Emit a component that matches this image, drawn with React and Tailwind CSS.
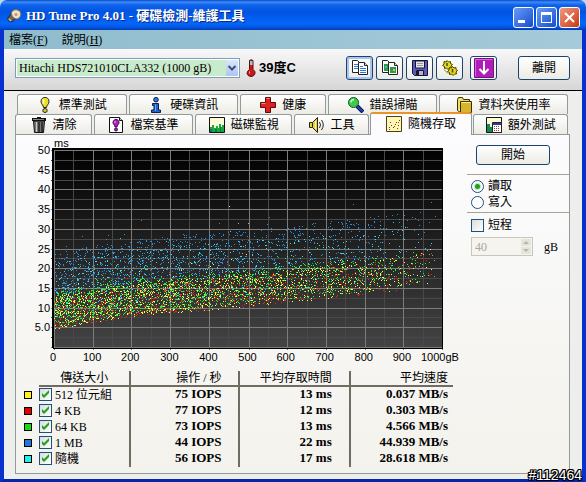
import React, { useState } from "react";
import clsx from "clsx";

const SANS = "font-['Liberation_Sans','Noto_Sans_CJK_TC',sans-serif]";
const SERIF = "font-['Liberation_Serif','Noto_Sans_CJK_TC',serif]";

/* ---------- icons ---------- */

const Icon = ({ children }) => (
  <svg viewBox="0 0 16 16" className="h-4 w-4 shrink-0" aria-hidden="true">
    {children}
  </svg>
);

const DriveIcon = () => (
  <Icon>
    <path d="M1.500 10.500l5-6 4 4-4 5-3 0z" fill="#6e6458" stroke="#2c241c" />
    <path d="M5.500 5.500c0-3.500 4.500-5 8-2.500 2.500 2.500 1 7-2.500 8-2.500 0-5.500-2.500-5.500-5.500z" fill="#f0dfc0" stroke="#8a7050" />
    <circle cx="10" cy="6.500" r="1.500" fill="#c09878" />
    <path d="M3 11l2 2" stroke="#cfc8bb" strokeWidth="1.500" />
  </Icon>
);

const BulbIcon = () => (
  <Icon>
    <path d="M4 4.500c0-5.500 8-5.500 8 0 0 3-2.500 3.500-2.500 6h-3c0-2.500-2.500-3-2.500-6z" fill="#e8e020" stroke="#222" />
    <path d="M6.500 2.500v4" stroke="#fff" strokeWidth="1.500" />
    <ellipse cx="8" cy="13.500" rx="2.200" ry="2" fill="#d8d020" stroke="#222" />
  </Icon>
);

const InfoIcon = () => (
  <Icon>
    <circle cx="8" cy="2.700" r="2.300" fill="#2a7be0" stroke="#0a1c50" />
    <path d="M4.500 6.500h6v6.500h2v2.500h-9v-2.500h2.500v-4.500h-1.500z" fill="#1e62cc" stroke="#0a1c50" />
    <path d="M7.500 7.500v6.500" stroke="#6ab0f4" />
  </Icon>
);

const CrossIcon = () => (
  <Icon>
    <path d="M5.500 0.500h5v5h5v5h-5v5h-5v-5h-5v-5h5z" fill="#e02020" stroke="#5c0a0a" />
    <path d="M6.500 1.500h3M1.500 6.500h4" stroke="#ff8a80" />
  </Icon>
);

const LensIcon = () => (
  <Icon>
    <path d="M9 9l6 6" stroke="#061250" strokeWidth="4" />
    <path d="M9 9l5.500 5.500" stroke="#2344b8" strokeWidth="2" />
    <circle cx="5.500" cy="5.500" r="5" fill="#3ccb4a" stroke="#0b5a1c" />
    <path d="M3 5.500c0-2 1-3 3-3" stroke="#c8ffc8" fill="none" strokeWidth="1.500" />
  </Icon>
);

const FolderIcon = () => (
  <Icon>
    <path d="M1.500 13.500v-11l1-2h4l1 2h6v2" fill="#f2dc68" stroke="#3a3000" />
    <path d="M4.500 4.500h11v11h-11z" fill="#d9b52c" stroke="#3a3000" />
    <path d="M1.500 13.500l3 2" stroke="#3a3000" />
    <path d="M5.500 5.500h9" stroke="#fff0a0" />
  </Icon>
);

const TrashIcon = () => (
  <Icon>
    <path d="M2.500 4h11l-1 11.500h-9z" fill="#777" stroke="#111" />
    <path d="M1 2.500h14" stroke="#111" strokeWidth="3" />
    <path d="M2 2.500h11" stroke="#888" />
    <path d="M6 .5h4" stroke="#111" />
    <path d="M5.500 5v10" stroke="#ccc" />
    <path d="M8 5v10M11 5v10" stroke="#222" strokeWidth="1.500" />
  </Icon>
);

const FileBulbIcon = () => (
  <Icon>
    <path d="M1.500 .5h10l3 3v12h-13z" fill="#fff" stroke="#111" />
    <path d="M11.500 .5v3h3" fill="#ccc" stroke="#111" />
    <path d="M5 5.500c0-4 6-4 6 0 0 2-2 2.500-2 4.500h-2c0-2-2-2.500-2-4.500z" fill="#b01cc0" stroke="#3c0646" />
    <path d="M7 4v2" stroke="#f0b0f8" />
    <circle cx="8" cy="12.500" r="1.500" fill="#b01cc0" stroke="#3c0646" />
  </Icon>
);

const MonitorIcon = () => (
  <Icon>
    <path d="M.5 .5h15v15h-15z" fill="#fdfcd8" stroke="#111" />
    <path d="M1 15v-5h2v-2h2v3h2v-2h2v2h1v-4h2v3h1v-2h2v7z" fill="#19a83c" />
    <path d="M1 12h2v3h-2zM6 12h2v3h-2zM11 10h1v5h-1z" fill="#0b7468" />
  </Icon>
);

const SpeakerIcon = () => (
  <Icon>
    <path d="M.5 5.500h3l5-5v15l-5-5h-3z" fill="#e6d228" stroke="#222" />
    <path d="M6.500 4v8" stroke="#fff7a0" />
    <path d="M3.500 5.500v5" stroke="#222" />
    <path d="M10.500 5q2 3 0 6M12.500 3q3.500 5 0 10" fill="none" stroke="#222" />
  </Icon>
);

const ScatterIcon = () => (
  <Icon>
    <path d="M.5 .5h15v15h-15z" fill="#fdf6b4" stroke="#4c4210" />
    <path
      d="M3 11h1v1h-1zM5 9h1v1h-1zM7 11h1v1h-1zM9 8h1v1h-1zM12 9h1v1h-1zM11 12h1v1h-1zM13 4h1v1h-1zM4 6h1v1h-1z"
      fill="#5c4a10"
      shapeRendering="crispEdges"
    />
    <path d="M3 13h1v1h-1zM8 10h1v1h-1zM10 6h1v1h-1zM12 6h1v1h-1z" fill="#d02020" shapeRendering="crispEdges" />
  </Icon>
);

const ExtraIcon = () => (
  <Icon>
    <path d="M.5 .5h15v15h-15z" fill="#fdfcd8" stroke="#111" />
    <path d="M1 15v-8h3v3h3v5z" fill="#138a54" />
    <path d="M6.500 5.500h9v10h-9z" fill="#fff" stroke="#222" />
    <path d="M7 7h8" stroke="#283c98" strokeWidth="2" />
    <path
      d="M8 9h1v1h-1zM10 9h1v1h-1zM12 9h1v1h-1zM8 11h1v1h-1zM10 11h1v1h-1zM12 11h1v1h-1zM8 13h1v1h-1zM10 13h1v1h-1zM12 13h1v1h-1z"
      fill="#a03c50"
    />
  </Icon>
);

const CopyTextIcon = () => (
  <Icon>
    <path d="M.5 .5h5l3 3v9h-8z" fill="#fff" stroke="#222" />
    <path d="M2 4.500h4M2 6.500h5M2 8.500h5" stroke="#2e7ad0" />
    <path d="M6.500 2.500h6l3 3v9h-9z" fill="#fff" stroke="#222" />
    <path d="M12.500 2.500v3h3" fill="#ddd" stroke="#222" />
    <path d="M8 6.500h3M8 8.500h6M8 10.500h6M8 12.500h6" stroke="#2e7ad0" />
  </Icon>
);

const CopyImageIcon = () => (
  <Icon>
    <path d="M.5 .5h5l3 3v9h-8z" fill="#fff" stroke="#222" />
    <path d="M2 4h4v7h-4z" fill="#2e9a48" />
    <path d="M6.500 2.500h6l3 3v9h-9z" fill="#fff" stroke="#222" />
    <path d="M12.500 2.500v3h3" fill="#ddd" stroke="#222" />
    <path d="M8 7h6v6h-6z" fill="#2e9a48" />
    <path d="M11 9h2v2h-2z" fill="#e0c840" />
    <path d="M3 6h2v2h-2z" fill="#48b8c0" />
  </Icon>
);

const SaveIcon = () => (
  <Icon>
    <path d="M.5 .5h15v15h-13l-2-2z" fill="#5a5cb4" stroke="#15153c" />
    <path d="M3.500 1h9v7h-9z" fill="#e4e4ec" stroke="#15153c" />
    <path d="M5 3.500h6M5 5.500h6" stroke="#999" />
    <path d="M4.500 10.500h7v5h-7z" fill="#b8b8b8" stroke="#15153c" />
    <path d="M6 11v4" stroke="#15153c" strokeWidth="2" />
  </Icon>
);

const GearsIcon = () => (
  <Icon>
    <path
      d="M2 1.500l2 .5 1-1.500 1.500 1.500 2-.5 0 2 2 1-1.500 1.500 .5 2-2 0-1.500 1.500-1.500-1.500-2 .5 0-2-2-1 1.500-1.500z"
      fill="#e4d81c"
      stroke="#4a4400"
    />
    <path
      d="M7.500 7.500l2 .5 1-1.500 1.500 1.500 2-.5 0 2 1.500 1-1.500 1.500 .5 2-2 0-1.500 1.500-1.500-1.500-2 .5 0-2-2-1 1.500-1.500z"
      fill="#e4d81c"
      stroke="#4a4400"
    />
    <path d="M5 3v3M10.500 9v3.500" stroke="#4a4400" strokeWidth="1.500" />
    <path d="M2 9.500l4 4" stroke="#8a8010" />
  </Icon>
);

const DownIcon = () => (
  <svg viewBox="0 0 20 20" className="h-5 w-5 shrink-0" aria-hidden="true">
    <path d="M.5 .5h19v19h-19z" fill="#b01cb8" stroke="#7a0f84" />
    <path d="M1.500 18.500v-17h17" fill="none" stroke="#d868e0" />
    <path d="M10 3v12M5.500 11l4.500 4.500 4.500-4.500" fill="none" stroke="#fff" strokeWidth="2" />
  </svg>
);

const Thermometer = () => (
  <svg viewBox="0 0 10 18" className="h-[18px] w-2.5 shrink-0" aria-hidden="true">
    <path d="M3.500 1.500q1.500-1.500 3.500 0v9q2.500 1.500 2 4-1 3-4 3t-4-3q0-2.500 2.500-4z" fill="#d01818" stroke="#5c0a0a" />
    <path d="M4 2h2.500v4h-2.500z" fill="#8fd0d8" />
    <path d="M3.500 12.500v2" stroke="#ffb0a8" />
  </svg>
);

/* ---------- data ---------- */

const topTabs = [
  { label: "標準測試", icon: <BulbIcon />, grow: "flex-110" },
  { label: "硬碟資訊", icon: <InfoIcon />, grow: "flex-110" },
  { label: "健康", icon: <CrossIcon />, grow: "flex-86" },
  { label: "錯誤掃瞄", icon: <LensIcon />, grow: "flex-109" },
  { label: "資料夾使用率", icon: <FolderIcon />, grow: "flex-130" },
];

const bottomTabs = [
  { label: "清除", icon: <TrashIcon />, grow: "flex-77" },
  { label: "檔案基準", icon: <FileBulbIcon />, grow: "flex-99" },
  { label: "磁碟監視", icon: <MonitorIcon />, grow: "flex-98" },
  { label: "工具", icon: <SpeakerIcon />, grow: "flex-74" },
  { label: "隨機存取", icon: <ScatterIcon />, grow: "flex-103", active: true },
  { label: "額外測試", icon: <ExtraIcon />, grow: "flex-95" },
];

const results = [
  { id: "r512", label: "512 位元組", swatch: "bg-[#fff21c]", iops: 75, ms: 13, speed: "0.037" },
  { id: "r4k", label: "4 KB", swatch: "bg-[#e00000]", iops: 77, ms: 12, speed: "0.303" },
  { id: "r64k", label: "64 KB", swatch: "bg-[#18d818]", iops: 73, ms: 13, speed: "4.566" },
  { id: "r1m", label: "1 MB", swatch: "bg-[#1c78dc]", iops: 44, ms: 22, speed: "44.939" },
  { id: "rnd", label: "隨機", swatch: "bg-[#20f0f0]", iops: 56, ms: 17, speed: "28.618" },
];

/* ---------- chart ---------- */

const LEFT = 38;
const BOTTOM = 212;
const COL = 38.7;
const ROW = 19.7;

const xs = Array.from({ length: 21 }, (_, i) => Math.round(LEFT + (i * COL) / 2));
const ys = Array.from({ length: 21 }, (_, i) => Math.round(BOTTOM - (i * ROW) / 2));

// fastest access time (ms) at each 100 gB
const floorMs = [4.5, 6.3, 7.8, 8.8, 9.3, 10.3, 11.4, 12.4, 13.4, 14.8, 17];

const floorAt = (gb) => {
  const i = Math.min(9, Math.floor(gb / 100));
  return floorMs[i] + (floorMs[i + 1] - floorMs[i]) * (gb / 100 - i);
};

const series = [
  { color: "#2c8cdc", count: 1050, from: 8.5, spread: 11 },
  { color: "#40d8e8", count: 750, from: 3, spread: 14 },
  { color: "#e82a1c", count: 1100, from: 0, spread: 8 },
  { color: "#f8f650", count: 1200, from: 0, spread: 8.5 },
  { color: "#38e840", count: 1500, from: 0.8, spread: 8.6 },
];

const makeRandom = (seed) => () => {
  seed = (seed * 1664525 + 1013904223) % 4294967296;
  return seed / 4294967296;
};

const dots = series.map(({ color, count, from, spread }, n) => {
  const rand = makeRandom(97 + n * 131);
  let d = "";
  for (let i = 0; i < count; i++) {
    const gb = 990 * (1 - Math.pow(1 - rand(), 0.62));
    const late = rand() > 0.95 ? rand() * 5 : 0;
    const ms = floorAt(gb) + from + rand() * spread + late;
    const x = Math.round(LEFT + (gb / 100) * COL);
    const y = Math.round(BOTTOM - (ms / 5) * ROW);
    d += `M${x} ${y}h1v1h-1z`;
  }
  return { color, d };
});

const Chart = () => (
  <svg viewBox="0 0 450 235" className={`block h-auto w-full text-[11px] ${SANS}`} role="img" aria-label="隨機存取">
    <defs>
      <linearGradient id="plot" x1="0" y1="0" x2="0" y2="1">
        <stop offset="0" stopColor="#000" />
        <stop offset="1" stopColor="#444" />
      </linearGradient>
    </defs>
    <g shapeRendering="crispEdges">
      <rect x="37" y="13" width="389" height="200" fill="url(#plot)" />
      {xs.map((x, i) =>
        i % 2 ? <rect key={x} x={x} y="15" width="1" height="199" fill="#484848" /> : null
      )}
      {ys.map((y, i) =>
        i % 2 ? <rect key={y} x="35" y={y} width="390" height="1" fill="#484848" /> : null
      )}
      {xs.map((x, i) =>
        i % 2 ? null : <rect key={x} x={x} y="15" width="1" height="200" fill="#7c7c7c" />
      )}
      {ys.map((y, i) =>
        i % 2 ? null : <rect key={y} x="35" y={y} width="390" height="1" fill="#7c7c7c" />
      )}
      <path d="M37 13h389v2h-389zM36 13h2v200h-2zM425 13h1v200h-1zM37 213h389v1h-389z" fill="#000" />
      {dots.map(({ color, d }) => (
        <path key={color} d={d} fill={color} />
      ))}
      <rect x="213" y="71" width="1" height="1" fill="#f0ee48" />
    </g>
    <text x="38" y="12">ms</text>
    {ys.map((y, i) =>
      i > 0 && i % 2 === 0 ? (
        <text key={y} x="34" y={y + 4} textAnchor="end">
          {i === 2 ? "5.0" : (i / 2) * 5}
        </text>
      ) : null
    )}
    {xs.map((x, i) =>
      i % 2 === 0 ? (
        <text key={x} x={i === 20 ? 404 : x - 1} y="226" textAnchor={i === 20 ? "start" : "middle"}>
          {i === 20 ? "1000gB" : i * 50}
        </text>
      ) : null
    )}
  </svg>
);

/* ---------- controls ---------- */

const Tab = ({ label, icon, grow, active }) => (
  <button
    type="button"
    role="tab"
    aria-selected={!!active}
    className={clsx(
      "flex min-w-0 items-center justify-center gap-1.5 rounded-t-[3px] border border-b-0 border-[#919b9c] whitespace-nowrap",
      grow,
      active
        ? "z-10 -mx-px -mt-0.5 -mb-px border-t-2 border-t-[#e8932c] bg-[#fcfcfe] pb-0.5"
        : "bg-linear-to-b from-white to-[#ecebe4]"
    )}
  >
    {icon}
    {label}
  </button>
);

const ToolButton = ({ label, focused, children }) => (
  <button
    type="button"
    aria-label={label}
    className={clsx(
      "flex h-6 w-[27px] items-center justify-center rounded-[3px] border border-[#1c4270] bg-linear-to-b from-white to-[#ecebe4]",
      focused && "shadow-[inset_0_0_0_2px_#a9c4ee]"
    )}
  >
    {children}
  </button>
);

const CheckBox = ({ id, defaultChecked }) => (
  <span className="grid h-[13px] w-[13px] shrink-0">
    <input
      id={id}
      type="checkbox"
      defaultChecked={defaultChecked}
      className="peer col-start-1 row-start-1 h-[13px] w-[13px] appearance-none border border-[#1c5180] bg-linear-to-br from-[#dcdcd7] to-white"
    />
    <svg
      viewBox="0 0 13 13"
      className="pointer-events-none invisible col-start-1 row-start-1 peer-checked:visible"
      aria-hidden="true"
    >
      <path d="M3 5v3l2 2 5-5v-3l-5 5z" fill="#21a121" />
    </svg>
  </span>
);

const Radio = ({ id, label, checked, onChange }) => (
  <div className="flex h-4 items-center gap-1">
    <input
      id={id}
      type="radio"
      name="mode"
      checked={checked}
      onChange={onChange}
      className="h-[13px] w-[13px] appearance-none rounded-full border border-[#1c5180] bg-white checked:bg-[radial-gradient(circle,#21a121_0_2px,#b8e8b8_3px,#fff_4px)]"
    />
    <label htmlFor={id}>{label}</label>
  </div>
);

const TitleBar = () => (
  <header className="flex h-[30px] items-center gap-[3px] rounded-t-[7px] bg-[linear-gradient(#0a48c8_0,#3c8cf8_2px,#0f62ea_5px,#0054e3_12px,#0566fa_24px,#0350d8_28px,#0038b0_30px)] pt-0.5 pr-1.5 pl-1.5">
    <DriveIcon />
    <h1 className={`ml-px flex-1 truncate text-[13px] font-bold text-white [text-shadow:1px_1px_#0a2a80] ${SERIF}`}>
      HD Tune Pro 4.01 - 硬碟檢測-維護工具
    </h1>
    <div className="mt-0.5 flex gap-0.5">
      <button
        type="button"
        aria-label="最小化"
        className="h-[21px] w-[21px] rounded-[3px] border border-white bg-linear-to-br from-[#6a9cf4] to-[#1848d0]"
      >
        <svg viewBox="0 0 19 19" aria-hidden="true">
          <path d="M4 12h7v3h-7z" fill="#fff" />
        </svg>
      </button>
      <button
        type="button"
        aria-label="最大化"
        className="h-[21px] w-[21px] rounded-[3px] border border-white bg-linear-to-br from-[#6a9cf4] to-[#1848d0]"
      >
        <svg viewBox="0 0 19 19" aria-hidden="true">
          <path d="M4 4h11v11h-11zM5 7v7h9v-7z" fill="#fff" fillRule="evenodd" />
        </svg>
      </button>
      <button
        type="button"
        aria-label="關閉"
        className="h-[21px] w-[21px] rounded-[3px] border border-white bg-linear-to-br from-[#f0987c] to-[#c83410]"
      >
        <svg viewBox="0 0 19 19" aria-hidden="true">
          <path d="M5 5l9 9M14 5l-9 9" stroke="#fff" strokeWidth="2" />
        </svg>
      </button>
    </div>
  </header>
);

const MenuBar = () => (
  <nav className={`flex h-[19px] items-center gap-3.5 bg-linear-to-r from-[#8fbccd] to-[#a5cad9] pl-[5px] ${SERIF}`}>
    <button type="button">
      檔案(<u>F</u>)
    </button>
    <button type="button">
      說明(<u>H</u>)
    </button>
  </nav>
);

const ToolBar = () => (
  <div className="flex h-[42px] items-center border-b border-black bg-linear-to-b from-[#f8f8f8] to-[#d6d6d6] pr-3 pb-1 pl-[11px]">
    <div className="grid h-5 min-w-0 max-w-[225px] flex-1 border border-[#7f9db9] bg-white p-px">
      <select
        aria-label="硬碟"
        className={`col-start-1 row-start-1 w-full appearance-none truncate bg-[#c8ebcb] pl-0.5 text-xs leading-4 ${SERIF}`}
      >
        <option>Hitachi HDS721010CLA332 (1000 gB)</option>
      </select>
      <span className="pointer-events-none col-start-1 row-start-1 flex w-3 items-center justify-center justify-self-end bg-linear-to-b from-[#dce6fc] to-[#b0c4f0]">
        <svg viewBox="0 0 10 8" className="h-2 w-2.5" aria-hidden="true">
          <path d="M1.500 2l3.500 3.500 3.500-3.500" fill="none" stroke="#3c5078" strokeWidth="2" />
        </svg>
      </span>
    </div>
    <div className="ml-1.5 flex items-center gap-[3px] text-[13px] font-bold">
      <Thermometer />
      39度C
    </div>
    <div className="ml-auto flex gap-[3px]">
      <ToolButton label="複製文字" focused>
        <CopyTextIcon />
      </ToolButton>
      <ToolButton label="複製圖片">
        <CopyImageIcon />
      </ToolButton>
      <ToolButton label="儲存">
        <SaveIcon />
      </ToolButton>
      <ToolButton label="選項">
        <GearsIcon />
      </ToolButton>
    </div>
    <div className="ml-[7px] flex">
      <ToolButton label="最小化到系統匣">
        <DownIcon />
      </ToolButton>
    </div>
    <button
      type="button"
      className="ml-[21px] h-6 w-[52px] rounded-[3px] border border-[#1c4270] bg-linear-to-b from-white to-[#ecebe4]"
    >
      離開
    </button>
  </div>
);

const Results = () => (
  <table className={`w-full table-fixed border-separate border-spacing-0 text-right text-xs ${SERIF}`}>
    <colgroup>
      <col className="w-[15px]" />
      <col className="w-[90px]" />
      <col className="w-[109px]" />
      <col className="w-[110px]" />
      <col className="w-[104px]" />
    </colgroup>
    <thead>
      <tr className="leading-[14px] [&>th]:p-0 [&>th]:font-normal">
        <td></td>
        <th className="border-b-2 border-[#706c62] text-center">傳送大小</th>
        <th className="border-b-2 border-l-2 border-[#706c62]">
          <span className="pr-[17px]">操作 / 秒</span>
        </th>
        <th className="border-b-2 border-l-2 border-[#706c62]">
          <span className="pr-[17px]">平均存取時間</span>
        </th>
        <th className="border-b-2 border-l-2 border-[#706c62]">
          <span className="pr-[5px]">平均速度</span>
        </th>
      </tr>
    </thead>
    <tbody>
      {results.map((r) => (
        <tr key={r.id} className="h-4 leading-4 [&>td]:py-0">
          <td className="px-0">
            <span className={`block h-2 w-2 border border-black ${r.swatch}`}></span>
          </td>
          <td className="px-0">
            <div className="flex items-center gap-[3px]">
              <CheckBox id={r.id} defaultChecked />
              <label htmlFor={r.id}>{r.label}</label>
            </div>
          </td>
          <td className="border-l-2 border-[#706c62] pr-[17px] text-[13px] leading-[14px] font-bold align-top">
            {r.iops} IOPS
          </td>
          <td className="border-l-2 border-[#706c62] pr-[17px] text-[13px] leading-[14px] font-bold align-top">
            {r.ms} ms
          </td>
          <td className="border-l-2 border-[#706c62] pr-[5px] text-[13px] leading-[14px] font-bold align-top">
            {r.speed} MB/s
          </td>
        </tr>
      ))}
    </tbody>
  </table>
);

const SidePanel = () => {
  const [mode, setMode] = useState("read");

  return (
    <aside className="w-[102px] shrink-0 pt-2.5">
      <button
        type="button"
        className="ml-[9px] h-5 w-[74px] rounded-[3px] border border-[#1c4270] bg-linear-to-b from-white to-[#ecebe4]"
      >
        開始
      </button>
      <fieldset className="mt-[9px] border-y border-[#a5a296] pt-[3px] pb-0.5 pl-1">
        <Radio id="read" label="讀取" checked={mode === "read"} onChange={() => setMode("read")} />
        <Radio id="write" label="寫入" checked={mode === "write"} onChange={() => setMode("write")} />
      </fieldset>
      <div className="mt-1 flex h-4 items-center gap-1 pl-1">
        <CheckBox id="short" />
        <label htmlFor="short">短程</label>
      </div>
      <div className="mt-1 flex items-center gap-[11px] pl-1">
        <div className="flex h-[19px] w-[62px] items-center border border-[#c9c7ba] bg-[#f5f4ee] pr-px">
          <input
            id="size"
            disabled
            defaultValue="40"
            className={`w-0 flex-1 bg-transparent pl-[3px] text-xs text-[#aca899] ${SERIF}`}
          />
          <svg viewBox="0 0 10 15" className="h-[15px] w-2.5" aria-hidden="true">
            <path d="M0 0h10v7h-10zM0 8h10v7h-10z" fill="#e6e5dc" />
            <path d="M2 5l3-3 3 3zM2 10l3 3 3-3z" fill="#b8b5a8" />
          </svg>
        </div>
        <label htmlFor="size" className={SERIF}>
          gB
        </label>
      </div>
    </aside>
  );
};

const App = () => {
  return (
    <div className={`relative flex min-h-screen flex-col bg-[#b9d8ea] text-xs text-black ${SANS}`}>
      <TitleBar />
      <div className="flex flex-1 flex-col border-4 border-t-0 border-[#0831d0] border-b-[#0428a8]">
        <MenuBar />
        <ToolBar />
        <main className="flex flex-1 flex-col bg-[#eeeeec] pt-[3px] pr-3 pb-[5px] pl-[11px]">
          <div role="tablist" className="mx-0.5 flex h-5 gap-0.5 leading-4">
            {topTabs.map((tab) => (
              <Tab key={tab.label} {...tab} />
            ))}
          </div>
          <div role="tablist" className="mr-0.5 flex h-5 gap-0.5 leading-4">
            {bottomTabs.map((tab) => (
              <Tab key={tab.label} {...tab} />
            ))}
          </div>
          <section className="flex flex-1 border border-[#919b9c] bg-linear-to-b from-[#fcfcfe] to-[#f3f2ec] pb-1.5">
            <div className="min-w-0 flex-1">
              <Chart />
              <div className="pr-3.5 pl-2">
                <Results />
              </div>
            </div>
            <SidePanel />
          </section>
        </main>
      </div>
      <span className="absolute right-1 bottom-0 text-sm leading-4 text-white [text-shadow:1px_0_#000,-1px_0_#000,0_1px_#000,0_-1px_#000,1px_1px_#000,-1px_-1px_#000,1px_-1px_#000,-1px_1px_#000]">
        #112464
      </span>
    </div>
  );
};

export default App;
